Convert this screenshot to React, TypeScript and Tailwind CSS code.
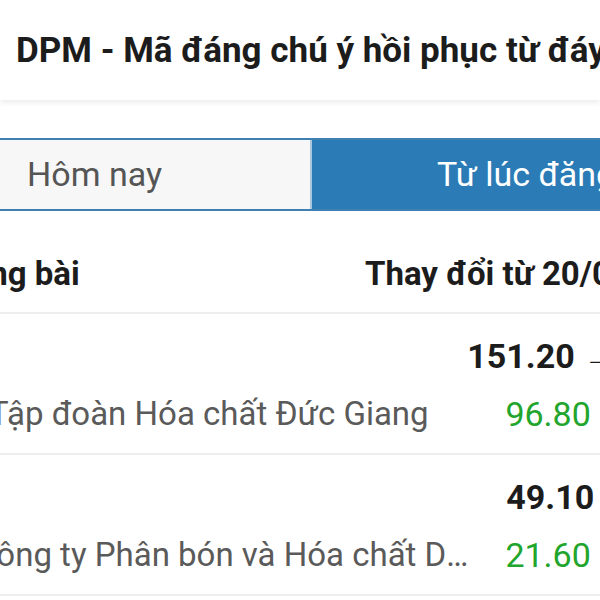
import React from "react";

const rows = [
  {
    ticker: "DGC",
    name: "CTCP Tập đoàn Hóa chất Đức Giang",
    nameBox: "w-[579px] -ml-[4px]",
    price: "151.20 → 248.00",
    change: "96.80 (64.02%)",
  },
  {
    ticker: "DPM",
    name: "Tổng Công ty Phân bón và Hóa chất Dầu khí - CTCP",
    nameBox: "w-[585px] -ml-[10px]",
    price: "49.10 → 70.70",
    change: "21.60 (43.99%)",
  },
];

export default function App() {
  return (
    <div className="w-[600px] h-[600px] overflow-hidden bg-white font-['Roboto',sans-serif] relative">
      <div className="h-[100px] flex items-center pl-4 bg-white relative z-10 shadow-[0_3px_5px_rgba(0,0,0,0.07)]">
        <h1 className="text-[35px] font-bold text-[#1c1c1c] whitespace-nowrap leading-none">
          DPM - Mã đáng chú ý hồi phục từ đáy
        </h1>
      </div>
      <div className="h-[38px] bg-white" />
      <div className="flex h-[73px] border-y-2 border-[#3f80b2]">
        <div className="w-[310px] shrink-0 bg-[#f7f7f7] flex items-center pl-[27px] text-[34px] text-[#555] whitespace-nowrap">
          Hôm nay
        </div>
        <div className="w-[2px] shrink-0 bg-[#a9c7de]" />
        <div className="flex-1 bg-[#2a7bb6] flex items-center pl-[125px] text-[34px] text-white whitespace-nowrap">
          Từ lúc đăng bài
        </div>
      </div>
      <div className="h-[103px] pt-[24px] flex items-center border-b-2 border-[#eeeeee] whitespace-nowrap text-[33px] font-bold text-[#1c1c1c]">
        <div className="w-[524px] -ml-[159px] shrink-0">Giá lúc đăng bài</div>
        <div>Thay đổi từ 20/09/2022</div>
      </div>
      <div className="-ml-[97px] w-[830px]">
        {rows.map((r) => (
          <div key={r.ticker} className="h-[141px] border-b-2 border-[#eeeeee] flex flex-col justify-center gap-[20px] pt-[2px]">
            <div className="flex items-center justify-between text-[34px] font-bold text-[#1c1c1c] leading-[38px]">
              <span>{r.ticker}</span>
              <span className="whitespace-nowrap">{r.price}</span>
            </div>
            <div className="flex items-center justify-between leading-[38px]">
              <span className={`${r.nameBox} truncate text-[33px] text-[#5a5a5a]`}>{r.name}</span>
              <span className="whitespace-nowrap text-[34px] text-[#22a52c]">{r.change}</span>
            </div>
          </div>
        ))}
      </div>
    </div>
  );
}
